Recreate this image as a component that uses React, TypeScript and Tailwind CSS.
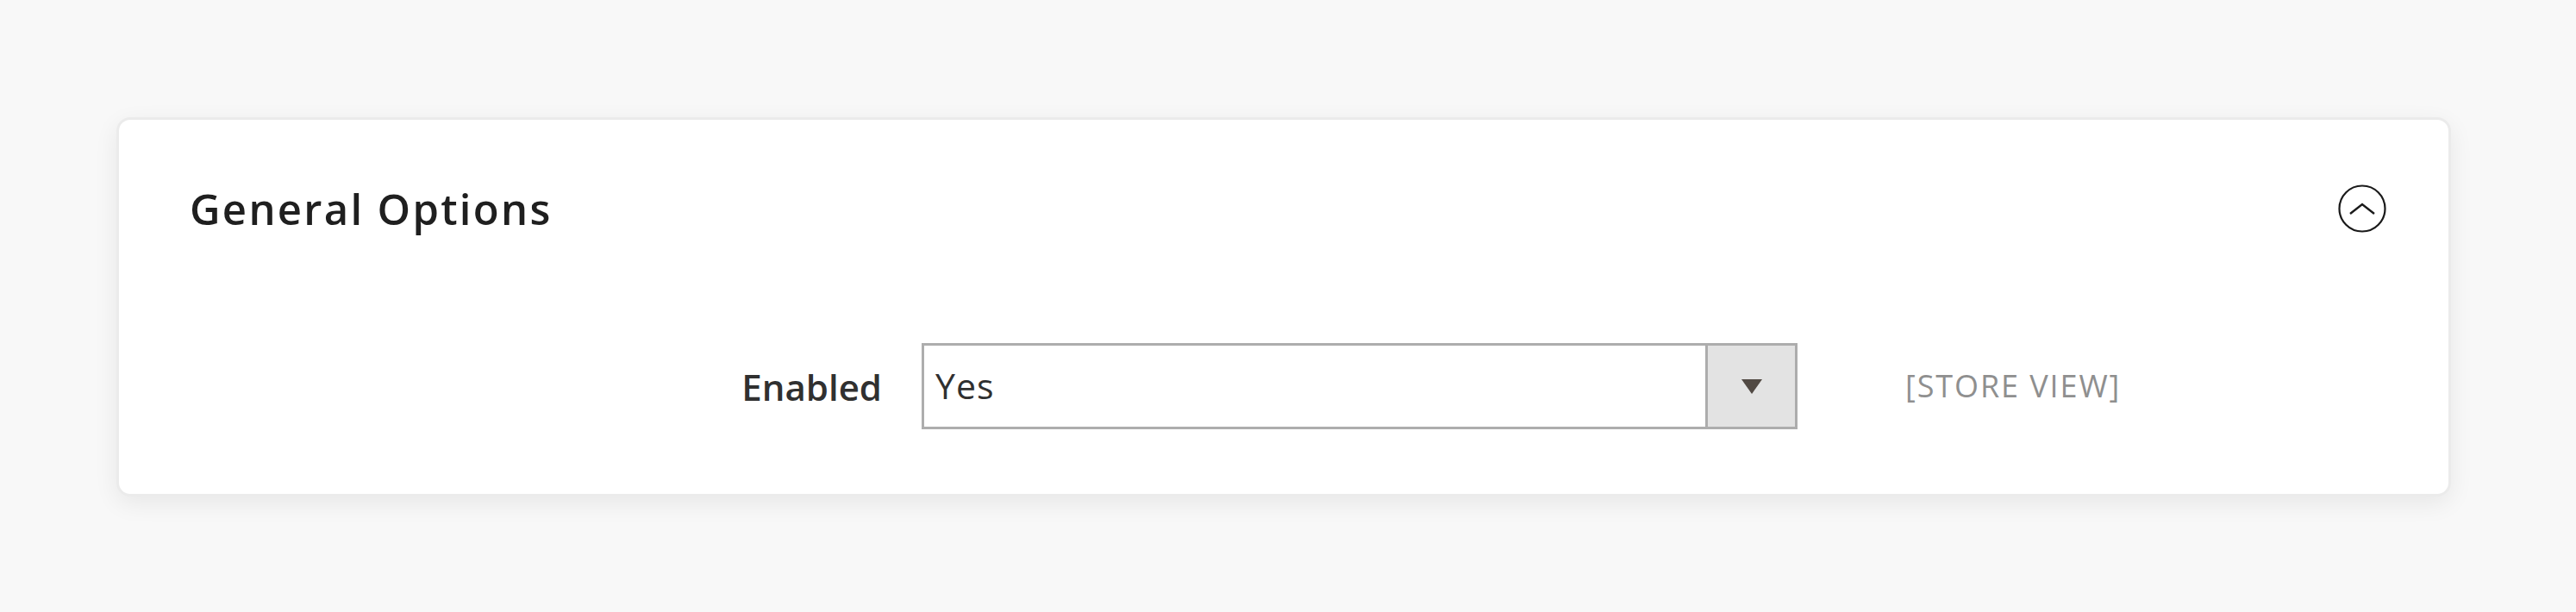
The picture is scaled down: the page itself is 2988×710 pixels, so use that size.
const ChevronCircle = () => (
  <svg width="58" height="58" viewBox="0 0 58 58" fill="none">
    <circle cx="29" cy="29" r="26.5" stroke="#1a1a1a" strokeWidth="2.2" />
    <path d="M15 35 L29 24 L43 35" stroke="#1a1a1a" strokeWidth="2.4" strokeLinejoin="miter" />
  </svg>
);

const App = () => {
  return (
    <div className="min-h-[710px] w-[2988px] bg-[#f8f8f8] pt-[136px] font-['Open_Sans',sans-serif]">
      <div className="ml-[135px] w-[2708px] rounded-[16px] border-[3px] border-[#ebebeb] bg-white pb-[75px] shadow-[0_8px_28px_rgba(0,0,0,0.07)]">
        <div className="mt-[72px] flex h-[62px] items-center justify-between pl-[82px] pr-[71px]">
          <h2 className="text-[49px] font-semibold leading-none tracking-[2.3px] text-[#1f1f1f]">General Options</h2>
          <ChevronCircle />
        </div>

        <div className="mt-[125px] flex h-[100px] items-center">
          <label className="w-[931px] pr-[46px] text-right text-[42px] font-semibold text-[#303030]">Enabled</label>
          <div className="flex h-[100px] w-[1016px] border-[3px] border-[#adadad] bg-white">
            <div className="flex flex-1 items-center pl-[13px] text-[41px] tracking-[1px] text-[#303030]">Yes</div>
            <div className="flex w-[104px] items-center justify-center border-l-[3px] border-[#adadad] bg-[#e3e3e3]">
              <svg width="24" height="17" viewBox="0 0 24 17">
                <path d="M0 0 H24 L12 17 Z" fill="#514943" />
              </svg>
            </div>
          </div>
          <div className="ml-[125px] text-[36px] tracking-[1.9px] text-[#8f8f8f]">[STORE VIEW]</div>
        </div>
      </div>
    </div>
  );
};

export default App;
